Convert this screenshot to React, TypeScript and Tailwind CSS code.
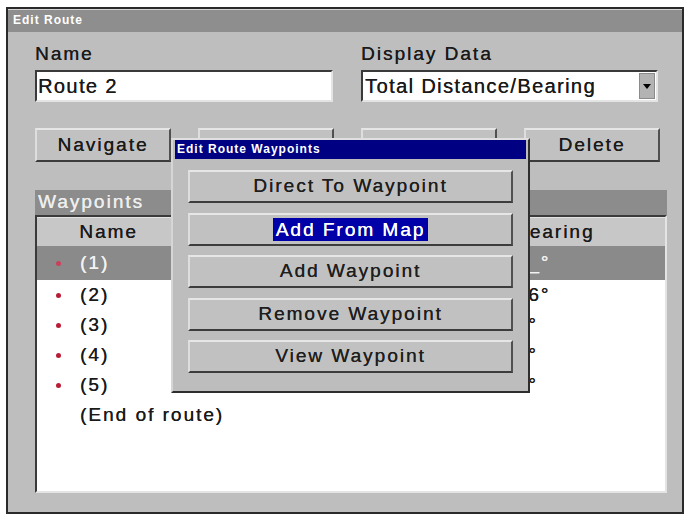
const font = "font-['Liberation_Sans',Arial,sans-serif]";
const heavy = "[text-shadow:0.25px_0_0_currentColor]";

const raised =
  "border-2 border-t-[#e6e6e6] border-l-[#dedede] border-r-[#505050] border-b-[#3c3c3c] bg-[#c1c1c1]";
const sunken =
  "border-2 border-t-[#3a3a3a] border-l-[#3a3a3a] border-r-[#e4e4e4] border-b-[#e4e4e4]";

type Row = { name: string; dist: string; bearing: string };

const rows: Row[] = [
  { name: "(1)", dist: "---", bearing: "___°" },
  { name: "(2)", dist: "1.38 mi", bearing: "316°" },
  { name: "(3)", dist: "0.92 mi", bearing: "45°" },
  { name: "(4)", dist: "2.05 mi", bearing: "78°" },
  { name: "(5)", dist: "NNW", bearing: "37°" },
];

const menu = ["Direct To Waypoint", "Add From Map", "Add Waypoint", "Remove Waypoint", "View Waypoint"];

export default function App() {
  return (
    <div className={`relative w-[690px] h-[521px] overflow-hidden bg-white pt-[7px] pl-[6px] ${font}`}>
      <div className="w-[678px] h-[507px] border-2 border-[#2a2a2a] bg-[#bebebe] flex flex-col">
        <div className="h-[23px] shrink-0 bg-[#8e8e8e] border-t border-[#d4d4d4] pl-[5px] text-[12px] font-bold tracking-[1px] leading-[21px] text-white">
          Edit Route
        </div>

        <div className={`flex-1 pl-[27px] pt-[11px] text-[#1a1a1a] ${heavy}`}>
          {/* name / display data */}
          <div className="flex gap-[28px]">
            <div className="w-[298px]">
              <div className="h-[22px] text-[19px] leading-[22px] tracking-[2px]">Name</div>
              <div className={`mt-[5px] h-[32px] bg-white ${sunken} pl-[1px] text-[20px] leading-[28px] tracking-[1.4px]`}>
                Route 2
              </div>
            </div>
            <div className="w-[297px]">
              <div className="h-[22px] text-[19px] leading-[22px] tracking-[2px]">Display Data</div>
              <div className={`mt-[5px] h-[32px] bg-white ${sunken} flex`}>
                <span className="flex-1 pl-[2px] text-[20px] leading-[28px] tracking-[1.4px]">
                  Total Distance/Bearing
                </span>
                <span className="w-[16px] mr-[1px] my-[1px] bg-[#b3b3b3] border border-[#8a8a8a] flex items-center justify-center">
                  <span className="w-0 h-0 border-l-[4px] border-r-[4px] border-t-[5px] border-l-transparent border-r-transparent border-t-black" />
                </span>
              </div>
            </div>
          </div>

          {/* buttons */}
          <div className="mt-[26px] grid grid-cols-[136px_136px_136px_136px] gap-[27px] text-[19px] tracking-[2px]">
            <div className={`h-[34px] ${raised} flex items-center justify-center`}>Navigate</div>
            <div className={`h-[34px] ${raised} flex items-center justify-center`}>Edit</div>
            <div className={`h-[34px] ${raised} flex items-center justify-center`}>Reverse</div>
            <div className={`h-[34px] ${raised} flex items-center justify-center`}>Delete</div>
          </div>

          {/* waypoints */}
          <div className="mt-[28px] w-[632px]">
            <div className="h-[25px] bg-[#8c8c8c] pl-[3px] text-[19px] leading-[24px] tracking-[2px] text-[#eeeeee]">
              Waypoints
            </div>
            <div className={`h-[278px] bg-white ${sunken} text-[19px] tracking-[2px]`}>
              <div className="h-[29px] bg-[#c7c7c7] border-t border-[#e2e2e2] grid grid-cols-[143px_315px_1fr] leading-[27px]">
                <span className="text-center">Name</span>
                <span className="text-center">Distance</span>
                <span className="pl-[20px]">Bearing</span>
              </div>
              {rows.map((r, i) => {
                const sel = i === 0;
                return (
                  <div
                    key={r.name}
                    className={`grid grid-cols-[143px_315px_1fr] items-center ${sel ? "h-[34px] bg-[#8a8a8a] text-[#f2f2f2]" : "h-[30px] text-[#1a1a1a]"}`}
                  >
                    <span className="flex items-center">
                      <span className={`ml-[19px] w-[5px] h-[5px] rounded-full ${sel ? "bg-[#c9405c]" : "bg-[#b81d36]"}`} />
                      <span className="ml-[19px]">{r.name}</span>
                    </span>
                    <span className="pl-[228px]">{r.dist}</span>
                    <span className="pl-[8px]">{r.bearing}</span>
                  </div>
                );
              })}
              <div className="h-[30px] leading-[30px] pl-[43px]">(End of route)</div>
            </div>
          </div>
        </div>
      </div>

      {/* popup menu */}
      <div className="absolute left-[171px] top-[138px] w-[359px] h-[255px] bg-[#bdbdbd] border-2 border-t-[#e0e0e0] border-l-[#d6d6d6] border-r-[#2e2e2e] border-b-[#2e2e2e] px-[2px]">
        <div className="h-[19px] bg-[#000082] pl-[2px] text-[12px] font-bold tracking-[1px] leading-[19px] text-white">
          Edit Route Waypoints
        </div>
        <div className={`mt-[11px] ml-[13px] w-[325px] flex flex-col gap-[9.5px] text-[19px] tracking-[2px] text-[#1e1e1e] ${heavy}`}>
          {menu.map((m, i) => (
            <div key={m} className={`h-[33px] ${raised} flex items-center justify-center`}>
              {i === 1 ? (
                <span className="bg-[#0000a8] text-white px-[3px] leading-[23px]">{m}</span>
              ) : (
                m
              )}
            </div>
          ))}
        </div>
      </div>
    </div>
  );
}
